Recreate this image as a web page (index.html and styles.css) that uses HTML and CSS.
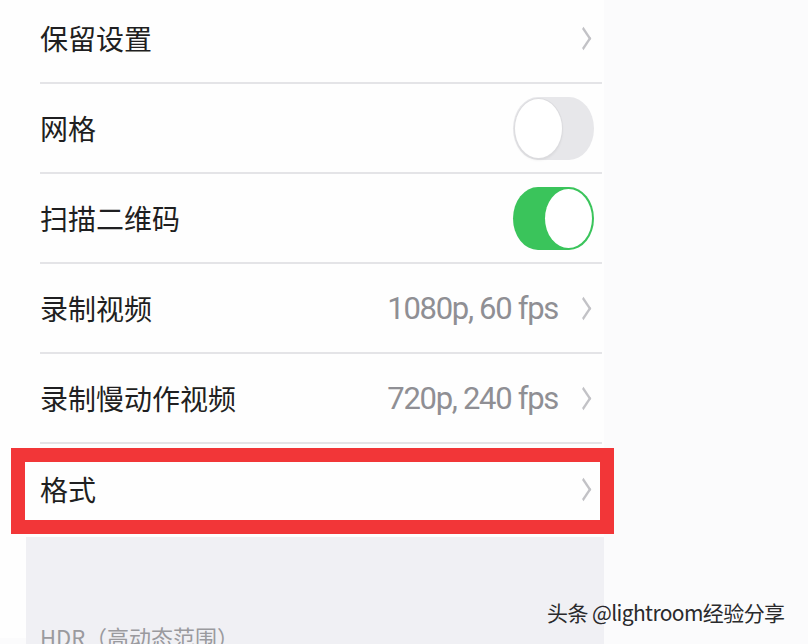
FILE: index.html
```html
<!DOCTYPE html>
<html lang="zh-CN">
<head>
    <meta charset="UTF-8">
    <meta name="viewport" content="width=device-width, initial-scale=1.0">
    <title>相机设置</title>
    <link rel="stylesheet" href="styles.css">
</head>
<body>
    <div class="screen">
        <ul class="settings-list">
            <li class="row">
                <span class="label">保留设置</span>
                <span class="chevron"></span>
            </li>
            <li class="row">
                <span class="label">网格</span>
                <span class="switch"><span class="knob"></span></span>
            </li>
            <li class="row">
                <span class="label">扫描二维码</span>
                <span class="switch on"><span class="knob"></span></span>
            </li>
            <li class="row">
                <span class="label">录制视频</span>
                <span class="value">1080p, 60 fps</span>
                <span class="chevron"></span>
            </li>
            <li class="row">
                <span class="label">录制慢动作视频</span>
                <span class="value">720p, 240 fps</span>
                <span class="chevron"></span>
            </li>
            <li class="row highlighted">
                <span class="label">格式</span>
                <span class="chevron"></span>
            </li>
        </ul>

        <div class="group-gap">
            <p class="section-title">HDR（高动态范围）</p>
        </div>
    </div>

    <div class="watermark">头条 @lightroom经验分享</div>
</body>
</html>
```

FILE: styles.css
```css
* {
    margin: 0;
    padding: 0;
    box-sizing: border-box;
    font-family: 'Noto Sans CJK SC', sans-serif;
}

body {
    background-color: #fbfbfc;
    width: 808px;
    height: 644px;
    overflow: hidden;
    position: relative;
}

.screen {
    width: 604px;
    height: 644px;
    background-color: #fefefe;
    margin-top: -6px;
}

.settings-list {
    list-style: none;
}

.row {
    position: relative;
    display: flex;
    align-items: center;
    height: 90px;
    margin-left: 40px;
    margin-right: 2px;
    padding-right: 8px;
    border-bottom: 2px solid #e4e4e7;
}

.row.highlighted {
    border-bottom: none;
}

/* red annotation box drawn over the row */
.row.highlighted::after {
    content: '';
    position: absolute;
    left: -29px;
    right: -12px;
    top: 4px;
    bottom: 0;
    border: 14px solid #f23638;
}

.label {
    flex: 1;
    font-size: 28px;
    color: #1f1f21;
}

.value {
    font-family: 'Roboto', sans-serif;
    font-size: 31px;
    color: #8f8f94;
    letter-spacing: -1.3px;
    margin-right: 20px;
}

.chevron {
    width: 11px;
    height: 11px;
    border-top: 2px solid #c2c2c6;
    border-right: 2px solid #c2c2c6;
    transform: scaleY(1.5) rotate(45deg);
    margin-right: 5px;
}

.switch {
    display: flex;
    width: 81px;
    height: 63px;
    padding: 2px;
    border-radius: 25px / 31.5px;
    background-color: #e7e7ea;
}

.switch .knob {
    width: 47px;
    height: 59px;
    border-radius: 50%;
    background-color: #fff;
    box-shadow: 0 0 0 1px #dcdcdf, 0 2px 3px rgba(0, 0, 0, 0.08);
}

.switch.on {
    background-color: #3ac45b;
    justify-content: flex-end;
}

.switch.on .knob {
    box-shadow: none;
}

.group-gap {
    margin-top: 3px;
    margin-left: 26px;
    height: 120px;
    background-color: #f0f0f4;
    padding: 83px 0 0 14px;
}

.section-title {
    font-size: 22px;
    color: #9a9a9e;
}

.watermark {
    position: absolute;
    left: 547px;
    top: 597px;
    font-size: 21px;
    color: #2a2a2c;
    letter-spacing: -0.6px;
    white-space: nowrap;
}
```
